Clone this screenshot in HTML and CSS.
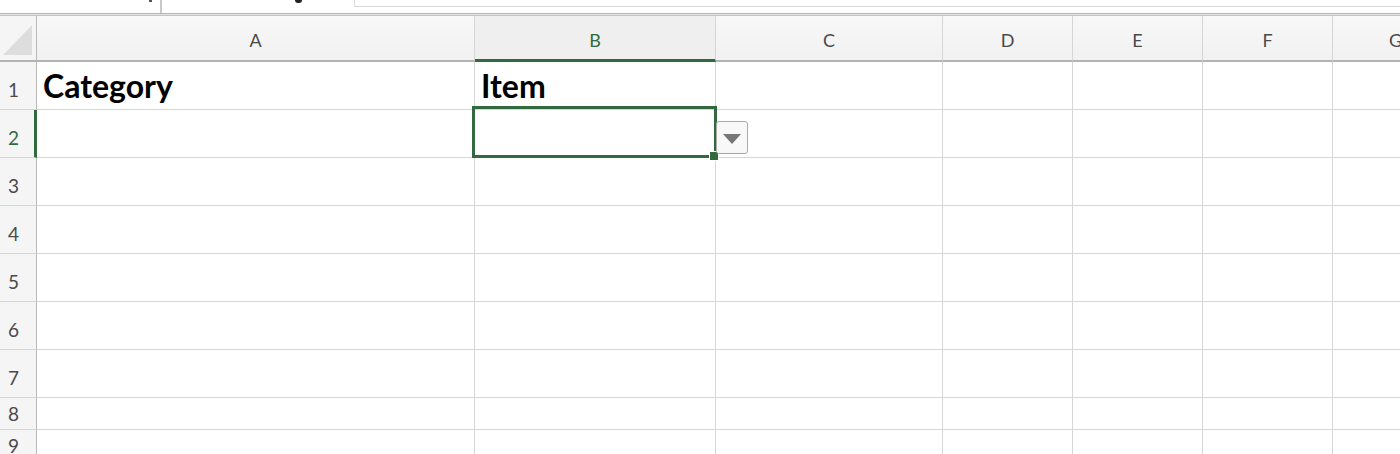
FILE: index.html
```html
<!DOCTYPE html>
<html>
<head>
<meta charset="utf-8">
<link rel="stylesheet" href="styles.css">
</head>
<body>
<div class="topbar">
  <div class="namebox"><span class="nb-arrow"></span></div>
  <div class="fxzone"><span class="fx-mark"></span></div>
  <div class="formula"><div class="formula-box"></div></div>
</div>
<div class="sep"></div>
<div class="sheet">
  <div class="corner"><div class="tri"></div></div>
  <div class="colhead">A</div>
  <div class="colhead sel">B</div>
  <div class="colhead">C</div>
  <div class="colhead">D</div>
  <div class="colhead">E</div>
  <div class="colhead">F</div>
  <div class="colhead last">G</div>

  <div class="rowhead">1</div>
  <div class="cell bold">Category</div>
  <div class="cell bold">Item</div>
  <div class="cell"></div><div class="cell"></div><div class="cell"></div><div class="cell"></div><div class="cell"></div>

  <div class="rowhead sel">2</div>
  <div class="cell"></div><div class="cell"></div><div class="cell"></div><div class="cell"></div><div class="cell"></div><div class="cell"></div><div class="cell"></div>

  <div class="rowhead">3</div>
  <div class="cell"></div><div class="cell"></div><div class="cell"></div><div class="cell"></div><div class="cell"></div><div class="cell"></div><div class="cell"></div>

  <div class="rowhead">4</div>
  <div class="cell"></div><div class="cell"></div><div class="cell"></div><div class="cell"></div><div class="cell"></div><div class="cell"></div><div class="cell"></div>

  <div class="rowhead">5</div>
  <div class="cell"></div><div class="cell"></div><div class="cell"></div><div class="cell"></div><div class="cell"></div><div class="cell"></div><div class="cell"></div>

  <div class="rowhead">6</div>
  <div class="cell"></div><div class="cell"></div><div class="cell"></div><div class="cell"></div><div class="cell"></div><div class="cell"></div><div class="cell"></div>

  <div class="rowhead">7</div>
  <div class="cell"></div><div class="cell"></div><div class="cell"></div><div class="cell"></div><div class="cell"></div><div class="cell"></div><div class="cell"></div>

  <div class="rowhead short">8</div>
  <div class="cell"></div><div class="cell"></div><div class="cell"></div><div class="cell"></div><div class="cell"></div><div class="cell"></div><div class="cell"></div>

  <div class="rowhead top">9</div>
  <div class="cell"></div><div class="cell"></div><div class="cell"></div><div class="cell"></div><div class="cell"></div><div class="cell"></div><div class="cell"></div>

  <div class="selection"></div>
  <div class="fill-handle"></div>
  <div class="dropdown"><span class="dd-tri"></span></div>
</div>
</body>
</html>
```
FILE: styles.css
```css
* { box-sizing: border-box; }
html, body { margin: 0; padding: 0; background: #fff; overflow: hidden; }
body { width: 1400px; height: 454px; font-family: Lato, "Open Sans", sans-serif; }

.topbar { display: flex; height: 13px; background: #fff; }
.namebox { width: 162px; border-right: 2px solid #c9c9c9; position: relative; }
.nb-arrow { position: absolute; right: 8px; top: 0; width: 3px; height: 2px; background: #555; }
.fxzone { width: 192px; position: relative; }
.fx-mark { position: absolute; left: 133px; top: 0; width: 7px; height: 3px; background: #222; border-radius: 0 0 4px 4px; }
.formula { flex: 1; }
.formula-box { height: 7px; border-left: 1px solid #dcdcdc; border-bottom: 1px solid #d6d6d6; background: #fff; }

.sep { height: 3px; border-top: 1px solid #b4b4b4; border-bottom: 1px solid #c4c4c4; background: #e4e4e4; }

.sheet {
  position: relative;
  display: grid;
  grid-template-columns: 37px 438px 241px 227px 130px 130px 130px 1fr;
  grid-template-rows: 46px repeat(7, 48px) 32px 1fr;
  height: 438px;
}

.corner {
  background: #f5f5f5;
  border-right: 1px solid #b9b9b9;
  border-bottom: 2px solid #b3b3b3;
  padding: 9px 4px 4px 3px;
}
.corner .tri { width: 29px; height: 30px; background: #dddddd; clip-path: polygon(100% 0, 100% 100%, 0 100%); }

.colhead {
  background: linear-gradient(#f8f8f8, #f1f1f1);
  border-right: 1px solid #d6d6d6;
  border-bottom: 2px solid #b3b3b3;
  color: #4a4a4a;
  font-size: 18px;
  display: flex;
  align-items: center;
  justify-content: center;
  padding-top: 4px;
}
.colhead.last { border-right: none; justify-content: flex-start; padding-left: 56px; }
.colhead.sel { color: #33693f; border-bottom: 3px solid #33693f; background: #efefef; padding-top: 5px; }

.rowhead {
  background: #f5f5f5;
  border-right: 1px solid #b9b9b9;
  border-bottom: 1px solid #d6d6d6;
  color: #4a4a4a;
  font-size: 19px;
  display: flex;
  align-items: flex-end;
  padding-left: 8px;
  padding-bottom: 10px;
  line-height: 1;
}
.rowhead.short { padding-bottom: 6px; }
.rowhead.top { align-items: flex-start; padding-top: 6px; border-bottom: none; }
.rowhead.sel { color: #33693f; border-right: 3px solid #33693f; }

.cell {
  border-right: 1px solid #d6d6d6;
  border-bottom: 1px solid #d6d6d6;
  display: flex;
  align-items: flex-end;
  padding: 0 6px 7px;
  line-height: 1;
  color: #000;
}
.cell.bold { font-weight: 700; font-size: 32px; }

.selection {
  position: absolute;
  left: 472px;
  top: 90px;
  width: 245px;
  height: 52px;
  border: 3px solid #33693f;
  pointer-events: none;
}
.fill-handle {
  position: absolute;
  left: 709px;
  top: 135px;
  width: 10px;
  height: 10px;
  background: #33693f;
  border: 1px solid #fff;
}
.dropdown {
  position: absolute;
  left: 716px;
  top: 105px;
  width: 32px;
  height: 33px;
  background: #f8f8f8;
  border: 1px solid #a9a9a9;
  border-radius: 3px;
  display: flex;
  align-items: center;
  justify-content: center;
}
.dd-tri {
  width: 0; height: 0;
  border-left: 9px solid transparent;
  border-right: 9px solid transparent;
  border-top: 10px solid #767676;
  margin-top: 2px;
}
```
